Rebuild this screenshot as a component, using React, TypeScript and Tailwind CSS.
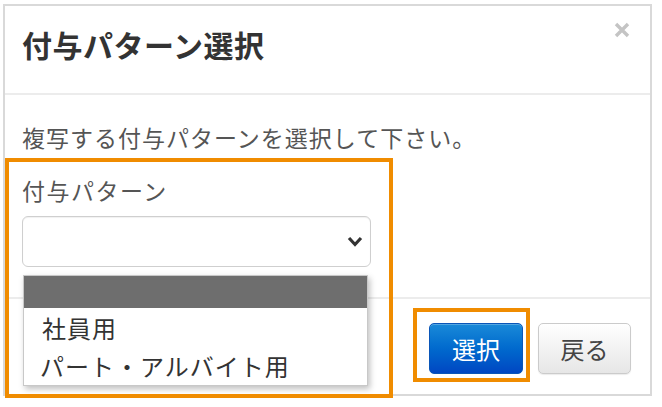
import React from "react";

const font = { fontFamily: '"Noto Sans CJK JP", "Noto Sans", sans-serif' };

export default function App() {
  return (
    <div
      className="relative w-[662px] h-[407px] bg-white overflow-hidden pt-[4px] pl-[3px]"
      style={font}
    >
      {/* Modal */}
      <div className="w-[649px] h-[392px] border-2 border-[#d9d9d9] bg-white flex flex-col">
        {/* Header */}
        <div className="h-[89px] border-b-2 border-[#ececec] flex items-start justify-between pl-[17px] pr-[20px]">
          <h1 className="mt-[18px] text-[30px] leading-[40px] font-bold text-[#333] tracking-[0.5px]">
            付与パターン選択
          </h1>
          <div className="mt-[16px] w-[16px] h-[16px] flex items-center justify-center">
            <svg width="16" height="16" viewBox="0 0 16 16">
              <path
                d="M2 2 L14 14 M14 2 L2 14"
                stroke="#c4c4c4"
                strokeWidth="3.4"
                strokeLinecap="butt"
              />
            </svg>
          </div>
        </div>

        {/* Body */}
        <div className="flex-1 pl-[17px] pt-[26px]">
          <p className="text-[23px] leading-[32px] text-[#555] tracking-[1px]">
            複写する付与パターンを選択して下さい。
          </p>
          <p className="mt-[21px] text-[23px] leading-[32px] text-[#555] tracking-[1.5px]">
            付与パターン
          </p>
          <div className="mt-[10px] w-[349px] h-[51px] border border-[#cfcfcf] rounded-[6px] bg-white flex items-center justify-end pr-[7px] shadow-[inset_0_1px_1px_rgba(0,0,0,0.06)]">
            <svg width="16" height="11" viewBox="0 0 16 11">
              <polyline
                points="2,2 8,8.5 14,2"
                fill="none"
                stroke="#333"
                strokeWidth="3.2"
              />
            </svg>
          </div>
        </div>

        {/* Footer */}
        <div className="h-[97px] border-t-2 border-[#ececec] flex items-start justify-end gap-[15px] pt-[24px] pr-[19px]">
          <button className="w-[94px] h-[51px] rounded-[5px] border border-[#0a56b8] bg-gradient-to-b from-[#1a8ad8] to-[#0046c2] text-white text-[24px] leading-none flex items-center justify-center shadow-[inset_0_1px_0_rgba(255,255,255,0.25)]">
            選択
          </button>
          <button className="w-[93px] h-[51px] rounded-[5px] border border-[#cbcbcb] bg-gradient-to-b from-[#ffffff] to-[#e6e6e6] text-[#444] text-[24px] leading-none flex items-center justify-center shadow-[0_1px_1px_rgba(0,0,0,0.08)]">
            戻る
          </button>
        </div>
      </div>

      {/* Dropdown list overlay */}
      <div className="absolute left-[23px] top-[275px] w-[345px] h-[111px] bg-white border border-[#c8c8c8] shadow-[2px_3px_6px_rgba(0,0,0,0.25)] flex flex-col">
        <div className="h-[32px] bg-[#6e6e6e]" />
        <div className="h-[39px] flex items-center pl-[18px] text-[24px] text-[#333] tracking-[1px]">
          社員用
        </div>
        <div className="h-[38px] flex items-center pl-[16px] text-[24px] text-[#333] tracking-[1px]">
          パート・アルバイト用
        </div>
      </div>

      {/* Orange annotation boxes */}
      <div className="absolute left-[5px] top-[158px] w-[388px] h-[240px] border-4 border-[#f08c00] pointer-events-none" />
      <div className="absolute left-[413px] top-[308px] w-[117px] h-[74px] border-4 border-[#f08c00] pointer-events-none" />
    </div>
  );
}
